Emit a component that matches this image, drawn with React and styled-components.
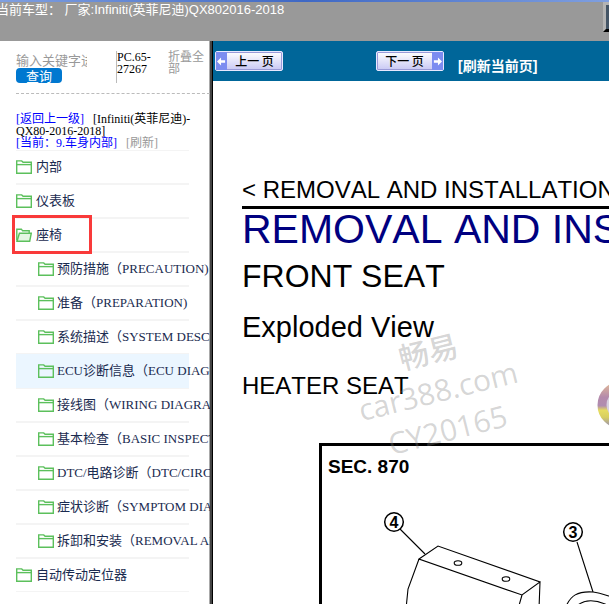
import { useState } from "react"
import styled, { createGlobalStyle, css } from "styled-components"

const GlobalStyle = createGlobalStyle`
  *, *::after { box-sizing: border-box; }
  body {
    margin: 0;
    overflow: hidden;
    background: #fff;
    font-family: "Liberation Serif", "Noto Sans CJK SC", serif;
    font-size: 13px;
    color: #000;
  }
`

const sections = [
  { name: "内部" },
  { name: "仪表板" },
  {
    name: "座椅",
    open: true,
    marked: true,
    children: [
      "预防措施（PRECAUTION)",
      "准备（PREPARATION)",
      "系统描述（SYSTEM DESCRIPTION)",
      "ECU诊断信息（ECU DIAGNOSIS)",
      "接线图（WIRING DIAGRAM)",
      "基本检查（BASIC INSPECTION)",
      "DTC/电路诊断（DTC/CIRCUIT)",
      "症状诊断（SYMPTOM DIAGNOSIS)",
      "拆卸和安装（REMOVAL AND)",
    ],
  },
  { name: "自动传动定位器" },
]

const FolderIcon = ({ open }) => (
  <Folder viewBox="0 0 16 14" aria-hidden="true">
    {open ? (
      <>
        <path d="M.8 12.5V1.2h4.6l1.2 1.6h6.6v2.4" />
        <path d="M1 13.2 3.4 5.2h11.9l-1.6 8z" fill="#e4f6e2" />
      </>
    ) : (
      <>
        <path d="M.7 13.2V.9h5l1.4 1.4h8.2v10.9z" />
        <path d="M.7 4.6h14.6" />
      </>
    )}
  </Folder>
)

const Arrow = ({ flip }) => (
  <ArrowBox>
    <svg viewBox="0 0 10 10" width="9" height="9" aria-hidden="true">
      <path
        d={flip ? "M10 5 5.5.5v3H1v3h4.5v3z" : "M0 5 4.5.5v3H9v3H4.5v3z"}
        fill="#fff"
      />
    </svg>
  </ArrowBox>
)

const SeatDiagram = () => (
  <Diagram viewBox="0 0 400 200" role="img" aria-label="HEATER SEAT">
    <path d="M97 80 86 110 84 130M97 80 116 67 218 103 200 116zM218 103l-1 27M200 116l-4 14" />
    <ellipse cx="136" cy="84" rx="3.8" ry="2.3" />
    <ellipse cx="184" cy="100" rx="3.8" ry="2.3" />
    <path d="M78 50 103 75M255 63 271 113" />
    <path d="M243 130c5-14 13-18 28-17 8 1 15 4 26 7M256 126c7-6 18-5 27-1 6 3 10 5 20 7" />
    <circle cx="72" cy="43" r="9.3" strokeWidth="1.5" />
    <circle cx="251" cy="53" r="9.3" strokeWidth="1.5" />
    <text x="72" y="49">4</text>
    <text x="251" y="59">3</text>
  </Diagram>
)

const Ball = () => (
  <BallSvg viewBox="0 0 48 48" aria-hidden="true">
    <defs>
      <linearGradient id="ring" x1="0" y1="0" x2="0" y2="1">
        <stop offset="0" stopColor="#d8b09c" />
        <stop offset=".3" stopColor="#b48aac" />
        <stop offset=".52" stopColor="#b08cb0" />
        <stop offset=".64" stopColor="#e6dc60" />
        <stop offset=".82" stopColor="#d8cf60" />
        <stop offset="1" stopColor="#a8a0a0" />
      </linearGradient>
    </defs>
    <circle cx="24" cy="24" r="19" fill="#d8d0e0" stroke="url(#ring)" strokeWidth="9" />
  </BallSvg>
)

const App = () => {
  const [keyword, setKeyword] = useState("")
  return (
    <Page>
      <GlobalStyle />
      <Header>
        <HeaderText>当前车型： 厂家:Infiniti(英菲尼迪)QX802016-2018</HeaderText>
        <HeaderButton type="button" aria-label="菜单" />
      </Header>
      <Body>
        <Sidebar>
          <Tools>
            <Search onSubmit={e => e.preventDefault()}>
              <SearchInput
                aria-label="输入关键字"
                placeholder="输入关键字进行"
                value={keyword}
                onChange={e => setKeyword(e.target.value)}
              />
              <SearchButton type="submit">查询</SearchButton>
            </Search>
            <Code>PC.65-27267</Code>
            <Collapse href="#">折叠全部</Collapse>
          </Tools>
          <Crumbs>
            <Crumb href="#">[返回上一级]</Crumb>
            <span>[Infiniti(英菲尼迪)-QX80-2016-2018]</span>
            <br />
            <Crumb href="#">[当前：9.车身内部]</Crumb>
            <Crumb href="#" $muted>[刷新]</Crumb>
          </Crumbs>
          <Tree>
            {sections.map(({ name, open, marked, children }) => (
              <li key={name}>
                <Row href="#" $marked={marked}>
                  <FolderIcon open={open} />
                  <RowLabel>{name}</RowLabel>
                </Row>
                {children && (
                  <Tree>
                    {children.map(child => (
                      <li key={child}>
                        <Row href="#" $child $active={child.startsWith("ECU")}>
                          <FolderIcon />
                          <RowLabel>{child}</RowLabel>
                        </Row>
                      </li>
                    ))}
                  </Tree>
                )}
              </li>
            ))}
          </Tree>
        </Sidebar>
        <Main>
          <Toolbar>
            <PageButton type="button">
              <Arrow />
              <span>上一 页</span>
            </PageButton>
            <PageButton type="button">
              <span>下一 页</span>
              <Arrow flip />
            </PageButton>
            <Refresh href="#">[刷新当前页]</Refresh>
          </Toolbar>
          <Doc>
            <DocCrumb>&lt; REMOVAL AND INSTALLATION</DocCrumb>
            <Title>REMOVAL AND INSTALLATION</Title>
            <Subtitle>FRONT SEAT</Subtitle>
            <Heading>Exploded View</Heading>
            <Caption>HEATER SEAT</Caption>
            <Figure>
              <figcaption>SEC. 870</figcaption>
              <SeatDiagram />
            </Figure>
            <Watermark>
              畅易
              <br />
              car388.com
              <br />
              CY20165
            </Watermark>
            <Ball />
          </Doc>
        </Main>
      </Body>
    </Page>
  )
}

const Page = styled.div`
  display: flex;
  flex-direction: column;
  height: 100vh;
`
const Header = styled.header`
  display: flex;
  justify-content: space-between;
  height: 41px;
  flex: none;
  overflow: hidden;
  background: linear-gradient(90deg, #7f9fe0, #3f68c4 50%, #7f9fe0) top / 100% 2px no-repeat #999;
`
const HeaderText = styled.div`
  margin-left: -4px;
  font: 13px/20px "Liberation Sans", "Noto Sans CJK SC", sans-serif;
  color: #fff;
  white-space: nowrap;
`
const HeaderButton = styled.button`
  width: 24px;
  height: 30px;
  margin: 2px -18px 0 0;
  padding: 0;
  flex: none;
  background: #445566;
  border: 3px solid #b4b4b4;
  border-bottom-color: #000;
`
const Body = styled.div`
  display: flex;
  flex: 1;
  min-height: 0;
`
const Sidebar = styled.nav`
  flex: 0 0 212px;
  padding: 10px 0 0 16px;
  overflow: hidden;
  border-right: 2px solid #444;
  box-shadow: inset -1px 0 #aaa;
`
const Tools = styled.div`
  display: grid;
  grid-template-columns: 100px 52px 40px;
  align-items: start;
  height: 43px;
  border-bottom: 1px dashed #bbb;
  font-size: 12px;
  line-height: 12px;
`
const Search = styled.form`
  display: flex;
  flex-direction: column;
  align-items: flex-start;
`
const SearchInput = styled.input`
  width: 71px;
  height: 17px;
  padding: 2px 0 0;
  border: 0;
  outline: 0;
  font: 13px/15px "Liberation Sans", "Noto Sans CJK SC", sans-serif;
  &::placeholder { color: #999; }
`
const SearchButton = styled.button`
  width: 46px;
  height: 15px;
  padding: 0;
  border: 0;
  border-radius: 4px;
  background: #0078d0;
  color: #fff;
  font: 13px/15px "Noto Sans CJK SC", sans-serif;
`
const Code = styled.div`
  height: 32px;
  border-left: 1px solid #bbb;
`
const Collapse = styled.a`
  color: #999;
  text-decoration: none;
`
const Crumbs = styled.div`
  width: 176px;
  padding-top: 19px;
  height: 56px;
  font-size: 12px;
  line-height: 12px;
`
const Crumb = styled.a`
  margin-right: 9px;
  color: ${p => (p.$muted ? "#999" : "#00f")};
  text-decoration: none;
`
const Tree = styled.ul`
  width: 173px;
  margin: 0;
  padding: 0;
  list-style: none;
`
const Row = styled.a`
  position: relative;
  display: flex;
  align-items: center;
  gap: ${p => (p.$child ? "3px" : "4px")};
  height: 34px;
  padding-left: ${p => (p.$child ? "22px" : "0")};
  border: solid #f4f4f4;
  border-width: 1px 0;
  color: #1a2b50;
  text-decoration: none;
  white-space: nowrap;
  ${p => p.$active && css`
    background: #ebf6ff;
    border-color: #ebf6ff;
  `}
  ${p => p.$marked && css`
    z-index: 1;
    &::after {
      content: "";
      position: absolute;
      left: -4px;
      top: -4px;
      width: 80px;
      height: 39px;
      border: 3px solid #f93a3a;
    }
  `}
`
const RowLabel = styled.span`
  padding-bottom: 4px;
`
const Folder = styled.svg`
  width: 16px;
  height: 14px;
  flex: none;
  fill: none;
  stroke: #5cc05c;
  stroke-width: 1.4;
`
const Main = styled.main`
  display: flex;
  flex-direction: column;
  flex: 1;
  min-width: 0;
  border-left: 1px solid #000;
`
const Toolbar = styled.div`
  display: grid;
  grid-template-columns: 161px 82px 1fr;
  align-items: center;
  height: 40px;
  flex: none;
  padding-left: 2px;
  background: #069;
`
const PageButton = styled.button`
  display: flex;
  justify-self: start;
  width: 68px;
  height: 20px;
  padding: 0;
  border: 1px solid #e8e8ff;
  border-radius: 2px;
  background: linear-gradient(#fff, #c8c8f4);
  box-shadow: inset 0 0 0 1px #9a9ad8;
  font: 500 12px/18px "Noto Sans CJK SC", sans-serif;
  color: #000;
  span { flex: 1; }
`
const ArrowBox = styled.i`
  display: flex;
  align-items: center;
  justify-content: center;
  width: 11px;
  height: 18px;
  background: #7c8cf0;
`
const Refresh = styled.a`
  padding-top: 10px;
  color: #fff;
  font: bold 14px/18px "Liberation Sans", "Noto Sans CJK SC", sans-serif;
  text-decoration: none;
  white-space: nowrap;
`
const Doc = styled.article`
  position: relative;
  display: flex;
  flex-direction: column;
  flex: 1;
  min-height: 0;
  padding: 95px 0 0 29px;
  overflow: hidden;
  font-family: "Liberation Sans", Arial, sans-serif;
  font-kerning: none;
  white-space: nowrap;
`
const DocCrumb = styled.div`
  padding-bottom: 2px;
  border-bottom: 3px solid #000;
  font-size: 24px;
  line-height: 28px;
`
const Title = styled.h1`
  margin: 0;
  font-size: 41px;
  font-weight: 400;
  line-height: 40px;
  color: #000080;
`
const Subtitle = styled.h2`
  margin: 9px 0 0;
  font-size: 32px;
  font-weight: 400;
  line-height: 36px;
`
const Heading = styled.h3`
  margin: 17px 0 0;
  font-size: 29px;
  font-weight: 400;
  line-height: 32px;
`
const Caption = styled.h4`
  margin: 29px 0 0;
  font-size: 24px;
  font-weight: 400;
  line-height: 28px;
`
const Figure = styled.figure`
  flex: 1;
  min-height: 0;
  margin: 43px 0 0 77px;
  padding-top: 9px;
  border: solid #000;
  border-width: 3px 0 0 3px;
  overflow: hidden;
  figcaption {
    padding-left: 6px;
    font-size: 19px;
    font-weight: 700;
    line-height: 24px;
  }
`
const Diagram = styled.svg`
  display: block;
  width: 400px;
  height: 200px;
  fill: none;
  stroke: #000;
  stroke-width: 1.1;
  text {
    fill: #000;
    stroke: none;
    font: bold 16px "Liberation Sans Narrow", "Liberation Sans", sans-serif;
    text-anchor: middle;
  }
`
const Watermark = styled.div`
  position: absolute;
  left: 140px;
  top: 250px;
  width: 170px;
  font: 500 30px/40px "Open Sans", "Noto Sans CJK SC", sans-serif;
  text-align: center;
  color: rgba(130, 130, 130, 0.32);
  transform: rotate(-14deg);
  pointer-events: none;
`
const BallSvg = styled.svg`
  position: absolute;
  right: -36px;
  top: 300px;
  width: 48px;
  height: 48px;
`

export default App
